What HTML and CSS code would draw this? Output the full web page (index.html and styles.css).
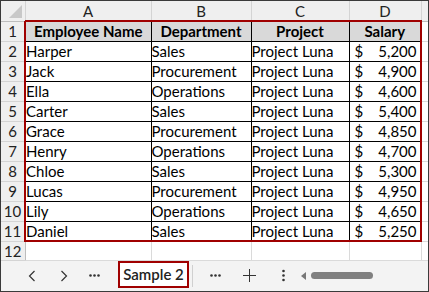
FILE: index.html
```html
<!DOCTYPE html>
<html>
<head>
<meta charset="utf-8">
<link rel="stylesheet" href="styles.css">
</head>
<body>
<div class="frame">
  <table class="sheet">
    <colgroup>
      <col class="c-rh"><col class="c-a"><col class="c-b"><col class="c-c"><col class="c-d"><col class="c-e">
    </colgroup>
    <thead>
      <tr class="colhead">
        <th class="corner"><span class="tri"></span></th>
        <th>A</th><th>B</th><th>C</th><th>D</th><th class="e"></th>
      </tr>
    </thead>
    <tbody>
      <tr class="hdr">
        <th class="rh">1</th>
        <td class="l t">Employee Name</td><td class="t">Department</td><td class="t">Project</td><td class="r t">Salary</td><td class="e"></td>
      </tr>
      <tr><th class="rh">2</th><td class="l">Harper</td><td>Sales</td><td>Project Luna</td><td class="r money"><span>$</span><span>5,200</span></td><td class="e"></td></tr>
      <tr><th class="rh">3</th><td class="l">Jack</td><td>Procurement</td><td>Project Luna</td><td class="r money"><span>$</span><span>4,900</span></td><td class="e"></td></tr>
      <tr><th class="rh">4</th><td class="l">Ella</td><td>Operations</td><td>Project Luna</td><td class="r money"><span>$</span><span>4,600</span></td><td class="e"></td></tr>
      <tr><th class="rh">5</th><td class="l">Carter</td><td>Sales</td><td>Project Luna</td><td class="r money"><span>$</span><span>5,400</span></td><td class="e"></td></tr>
      <tr><th class="rh">6</th><td class="l">Grace</td><td>Procurement</td><td>Project Luna</td><td class="r money"><span>$</span><span>4,850</span></td><td class="e"></td></tr>
      <tr><th class="rh">7</th><td class="l">Henry</td><td>Operations</td><td>Project Luna</td><td class="r money"><span>$</span><span>4,700</span></td><td class="e"></td></tr>
      <tr><th class="rh">8</th><td class="l">Chloe</td><td>Sales</td><td>Project Luna</td><td class="r money"><span>$</span><span>5,300</span></td><td class="e"></td></tr>
      <tr><th class="rh">9</th><td class="l">Lucas</td><td>Procurement</td><td>Project Luna</td><td class="r money"><span>$</span><span>4,950</span></td><td class="e"></td></tr>
      <tr><th class="rh">10</th><td class="l">Lily</td><td>Operations</td><td>Project Luna</td><td class="r money"><span>$</span><span>4,650</span></td><td class="e"></td></tr>
      <tr><th class="rh">11</th><td class="l b">Daniel</td><td class="b">Sales</td><td class="b">Project Luna</td><td class="r b money"><span>$</span><span>5,250</span></td><td class="e"></td></tr>
      <tr class="empty"><th class="rh">12</th><td></td><td></td><td></td><td></td><td class="e"></td></tr>
    </tbody>
  </table>
  <div class="tabbar">
    <svg class="nav n1" width="8" height="12" viewBox="0 0 8 12"><path d="M6.5 1 L1.5 6 L6.5 11" fill="none" stroke="#333" stroke-width="1.2"/></svg>
    <svg class="nav n2" width="8" height="12" viewBox="0 0 8 12"><path d="M1.5 1 L6.5 6 L1.5 11" fill="none" stroke="#333" stroke-width="1.2"/></svg>
    <svg class="dots" width="11" height="3" viewBox="0 0 11 3"><circle cx="1.5" cy="1.5" r="1.3" fill="#333"/><circle cx="5.5" cy="1.5" r="1.3" fill="#333"/><circle cx="9.5" cy="1.5" r="1.3" fill="#333"/></svg>
    <span class="tab">Sample 2</span>
    <span class="sep"></span>
    <svg class="dots d2" width="11" height="3" viewBox="0 0 11 3"><circle cx="1.5" cy="1.5" r="1.3" fill="#333"/><circle cx="5.5" cy="1.5" r="1.3" fill="#333"/><circle cx="9.5" cy="1.5" r="1.3" fill="#333"/></svg>
    <svg class="plus" width="13" height="13" viewBox="0 0 13 13"><path d="M6.5 0 V13 M0 6.5 H13" stroke="#333" stroke-width="1"/></svg>
    <svg class="vdots" width="3" height="13" viewBox="0 0 3 13"><circle cx="1.5" cy="2" r="1.3" fill="#333"/><circle cx="1.5" cy="6.5" r="1.3" fill="#333"/><circle cx="1.5" cy="11" r="1.3" fill="#333"/></svg>
    <span class="scroll"><span class="arrow"></span><span class="thumb"></span></span>
  </div>
</div>
</body>
</html>
```
FILE: styles.css
```css
* { box-sizing: border-box; }
html, body { margin: 0; padding: 0; background: #fff; }
.frame {
  width: 429px;
  height: 292px;
  border: 1px solid #3a3a3a;
  overflow: hidden;
  display: flex;
  flex-direction: column;
  font-family: "Lato", "Open Sans", sans-serif;
}
.sheet {
  border-collapse: collapse;
  table-layout: fixed;
  width: 427px;
  font-size: 15px;
  color: #000;
}
.c-rh { width: 24px; }
.c-a { width: 126px; }
.c-b { width: 100px; }
.c-c { width: 98px; }
.c-d { width: 72px; }
.c-e { width: 7px; }
.sheet th, .sheet td {
  padding: 0;
  overflow: hidden;
  white-space: nowrap;
}
.colhead th {
  height: 20px;
  background: #efefef;
  font-weight: normal;
  font-size: 15px;
  text-align: center;
  border-right: 1px solid #d4d4d4;
  border-bottom: 1px solid #bdbdbd;
  color: #222;
}
.colhead th.e { border-right: none; }
.corner { position: relative; }
.tri {
  position: absolute;
  right: 3px;
  bottom: 3px;
  width: 0; height: 0;
  border-left: 13px solid transparent;
  border-bottom: 13px solid #c8c8c8;
}
.rh {
  background: #efefef;
  font-weight: normal;
  text-align: center;
  font-size: 15px;
  border-right: 1px solid #bdbdbd;
  border-bottom: 1px solid #d4d4d4;
  color: #222;
}
tbody tr { height: 20px; }
tbody td {
  border: 1px solid #000;
  padding-left: 2px;
  line-height: 18px;
}
tbody td.e, .empty td {
  border: none;
  border-right: 1px solid #dadada;
  border-bottom: 1px solid #dadada;
}
.hdr td { background: #d9d9d9; font-weight: bold; text-align: center; padding-left: 0; }
.hdr td.e { background: #fff; }
td.l { border-left: 2px solid #a00000; }
td.r { border-right: 2px solid #a00000; }
td.t { border-top: 2px solid #a00000; }
td.b { border-bottom: 2px solid #a00000; }
.money span { display: inline-block; }
.money span:first-child { padding-left: 5px; width: 24px; }
.money span:last-child { width: 43px; text-align: right; }
.empty { height: 19px; }
.tabbar {
  flex: 1;
  background: #f3f3f3;
  display: flex;
  align-items: center;
  font-size: 15px;
  color: #333;
}
.nav.n1 { margin-left: 27px; }
.nav.n2 { margin-left: 24px; }
.dots { margin-left: 21px; }
.tab {
  margin-left: 18px;
  align-self: flex-start;
  background: #fff;
  border: 2px solid #a00000;
  height: 27px;
  width: 71px;
  text-align: center;
  line-height: 23px;
  font-weight: 600;
  font-size: 15px;
  color: #222;
}
.sep { width: 1px; height: 22px; background: #d0d0d0; margin-left: 3px; }
.dots.d2 { margin-left: 17px; }
.plus { margin-left: 22px; }
.vdots { margin-left: 26px; }
.scroll { display: flex; align-items: center; margin-left: 16px; }
.arrow {
  width: 0; height: 0;
  border-top: 4px solid transparent;
  border-bottom: 4px solid transparent;
  border-right: 5px solid #777;
}
.thumb {
  width: 62px; height: 7px;
  background: #808080;
  border-radius: 4px;
  margin-left: 5px;
}
```
